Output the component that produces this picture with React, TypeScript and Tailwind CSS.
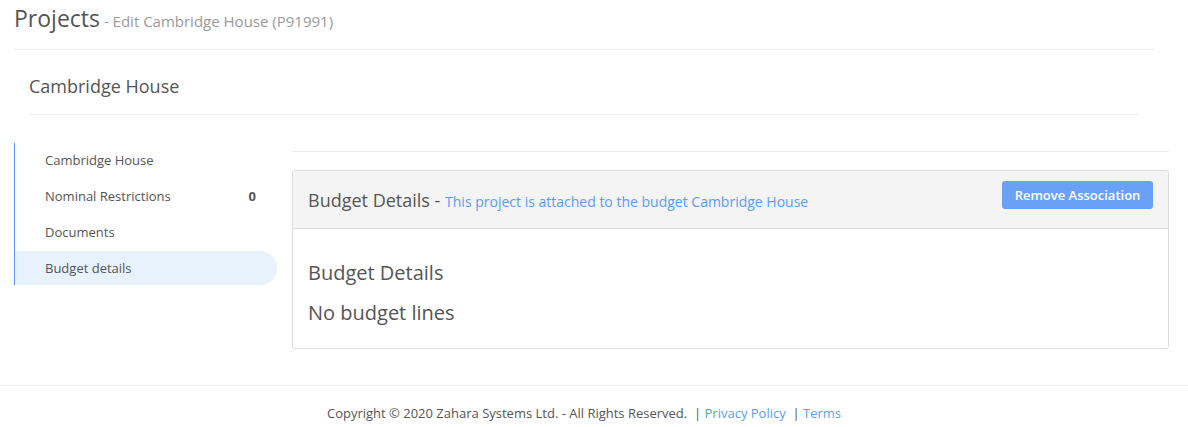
const navItems = [
    { label: "Cambridge House" },
    { label: "Nominal Restrictions", badge: "0" },
    { label: "Documents" },
    { label: "Budget details", active: true },
];

function Sidebar() {
    return (
        <div className="w-[263px] shrink-0 mt-[28px] self-start flex flex-col gap-[2px] border-l border-[#5b9bf8]">
            {navItems.map((item) => (
                <div
                    key={item.label}
                    className={
                        "h-[34px] flex items-center justify-between pl-[30px] pr-[21px] pt-px rounded-r-full text-[13px] text-[#555] " +
                        (item.active ? "bg-[#e7f2fd]" : "")
                    }
                >
                    <span>{item.label}</span>
                    {item.badge && <span className="font-bold">{item.badge}</span>}
                </div>
            ))}
        </div>
    );
}

function BudgetCard() {
    return (
        <div className="border border-[#ddd] rounded-[3px] overflow-hidden">
            <div className="h-[58px] bg-[#f4f4f4] border-b border-[#ddd] flex items-start justify-between px-[15px]">
                <div className="pt-[16px] leading-[26px]">
                    <span className="text-[18px] text-[#555]">Budget Details - </span>
                    <span className="text-[14px] text-[#5b9bf8]">This project is attached to the budget Cambridge House</span>
                </div>
                <button className="mt-[10px] h-[28px] w-[151px] pt-px rounded-[3px] bg-[#6aa1f7] text-white text-[13px] font-semibold">
                    Remove Association
                </button>
            </div>
            <div className="px-[15px] pt-[30px] pb-[21px] flex flex-col gap-[12px] text-[20px] leading-[28px] text-[#555]">
                <div>Budget Details</div>
                <div>No budget lines</div>
            </div>
        </div>
    );
}

export default function App() {
    return (
        <div className="w-[1188px] h-[427px] bg-white overflow-hidden font-['Open_Sans',sans-serif]">
            <div className="w-[1140px] ml-[14px]">
                <div className="h-[50px] border-b border-[#eee] pt-[3px] leading-[30px]">
                    <span className="text-[23px] text-[#555]">Projects</span>
                    <span className="text-[15px] text-[#9a9a9a]"> - Edit Cambridge House (P91991)</span>
                </div>
                <div className="mx-[15px] h-[65px] pt-[24px] border-b border-[#eee] text-[18px] leading-[24px] text-[#555]">
                    Cambridge House
                </div>
            </div>
            <div className="ml-[14px] w-[1155px] flex gap-[15px]">
                <Sidebar />
                <div className="flex-1">
                    <div className="mt-[36px] border-t border-[#eee] pt-[18px]">
                        <BudgetCard />
                    </div>
                </div>
            </div>
            <div className="mt-[36px] border-t border-[#eee] pt-[17px] text-center text-[13px] leading-[20px] text-[#555] pr-[20px]">
                Copyright © 2020 Zahara Systems Ltd. - All Rights Reserved. &nbsp;|{" "}
                <span className="text-[#5b9bf8]">Privacy Policy</span> &nbsp;|{" "}
                <span className="text-[#5b9bf8]">Terms</span>
            </div>
        </div>
    );
}
